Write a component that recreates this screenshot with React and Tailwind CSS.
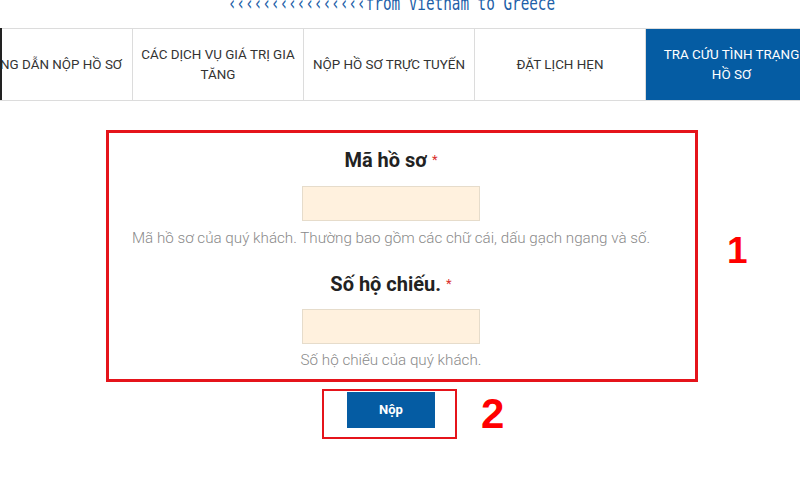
export default function App() {
  const cell = "w-[171px] shrink-0 flex items-center justify-center text-center border-r border-[#dcdcdc] px-2 leading-[20px]";
  return (
    <div className="w-[800px] h-[500px] bg-white overflow-hidden relative" style={{ fontFamily: "Roboto, 'Noto Sans', sans-serif" }}>
      <div className="h-[28px] overflow-hidden relative">
        <div className="absolute left-[228px] top-[-3px] text-[14.3px] leading-[18px] text-[#1d5fa8] whitespace-nowrap scale-y-[1.35] origin-bottom" style={{ fontFamily: "'DejaVu Sans Mono', monospace" }}>
          ‹‹‹‹‹‹‹‹‹‹‹‹‹‹‹‹from Vietnam to Greece
        </div>
        <div className="absolute left-[565px] top-[-6px] text-[11px] leading-[12px] text-[#b8b8b8] whitespace-nowrap">
          ········ ··· ··  ········ ····· ··· ···
        </div>
      </div>
      <div className="h-[73px] border-t border-b border-[#dcdcdc] flex ml-[-38px] text-[13.4px] text-[#333] relative">
        <div className={cell}>HƯỚNG DẪN NỘP HỒ SƠ</div>
        <div className={cell}>CÁC DỊCH VỤ GIÁ TRỊ GIA TĂNG</div>
        <div className={cell}>NỘP HỒ SƠ TRỰC TUYẾN</div>
        <div className={cell}>ĐẶT LỊCH HẸN</div>
        <div className="w-[171px] shrink-0 flex items-center justify-center text-center px-2 leading-[20px] bg-[#055ca3] text-white whitespace-nowrap">
          <span>TRA CỨU TÌNH TRẠNG<br />HỒ SƠ</span>
        </div>
      </div>
      <div className="absolute left-0 top-[28px] w-[2px] h-[72px] bg-[#222]"></div>

      <div className="flex items-center mt-[29px]">
        <div className="ml-[106px] w-[592px] border-[3px] border-[#e5141b] pt-[15px] pb-[8px] pr-[22px] flex flex-col items-center">
          <div className="h-[24px] leading-[24px] text-[20px] font-bold text-[#222]">
            Mã hồ sơ <span className="text-[#d9302c] text-[13px] font-normal align-top">*</span>
          </div>
          <div className="mt-[14px] w-[178px] h-[35px] bg-[#fff1de] border border-[#e6dccb]"></div>
          <div className="mt-[6px] h-[22px] leading-[22px] text-[15.2px] text-[#8a8a8a] font-light whitespace-nowrap">
            Mã hồ sơ của quý khách. Thường bao gồm các chữ cái, dấu gạch ngang và số.
          </div>
          <div className="mt-[23px] h-[24px] leading-[24px] text-[20px] font-bold text-[#222]">
            Số hộ chiếu. <span className="text-[#d9302c] text-[13px] font-normal align-top">*</span>
          </div>
          <div className="mt-[13px] w-[178px] h-[35px] bg-[#fff1de] border border-[#e6dccb]"></div>
          <div className="mt-[5px] h-[22px] leading-[22px] text-[15.2px] text-[#8a8a8a] font-light">
            Số hộ chiếu của quý khách.
          </div>
        </div>
        <div className="ml-[29px] mt-[-12px] text-[37px] font-black text-[#f00] leading-none" style={{ fontFamily: "'Liberation Sans', Arial, sans-serif" }}>1</div>
      </div>

      <div className="flex items-center mt-[7px]">
        <div className="ml-[322px] w-[135px] h-[50px] border-2 border-[#e5141b] pl-[23px] pt-[1px]">
          <div className="w-[88px] h-[36px] bg-[#055ca3] flex items-center justify-center text-white text-[13px] font-bold">Nộp</div>
        </div>
        <div className="ml-[24px] text-[42px] font-black text-[#f00] leading-none" style={{ fontFamily: "'Liberation Sans', Arial, sans-serif" }}>2</div>
      </div>
    </div>
  );
}
